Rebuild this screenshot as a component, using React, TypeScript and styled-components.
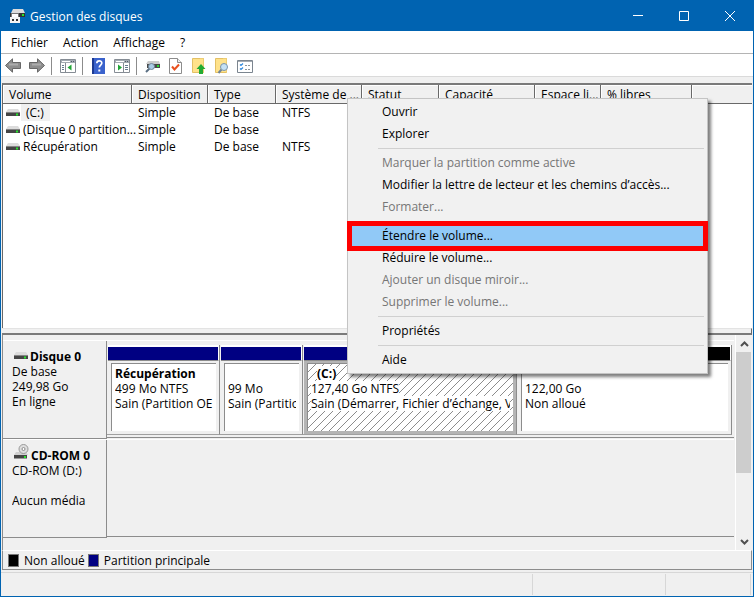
import React from "react";
import styled, { createGlobalStyle, css } from "styled-components";

const GlobalStyle = createGlobalStyle`
  *, *::before, *::after { box-sizing: border-box; }
  body { margin: 0; background: #f0f0f0; }
  body, button { font-family: "Open Sans", "Noto Sans", sans-serif; font-size: 12px; line-height: 15px; color: #000; }
  button { border: 0; padding: 0; margin: 0; background: none; }
  svg { display: block; flex: none; }
`;

const Window = styled.div`
  display: flex;
  flex-direction: column;
  min-height: 100vh;
  border: 1px solid #0063b1;
  background: #f0f0f0;
  position: relative;
`;

const TitleBar = styled.header`
  display: flex;
  align-items: center;
  height: 30px;
  padding-left: 8px;
  gap: 4px;
  background: #0063b1;
  color: #fff;
`;

const Title = styled.h1`
  flex: 1;
  margin: 0;
  font-size: 12px;
  font-weight: 400;
`;

const WindowControls = styled.div`
  display: flex;
`;

const WindowButton = styled.button`
  display: grid;
  place-items: center;
  width: 46px;
  height: 30px;
`;

const MenuBar = styled.nav`
  display: flex;
  gap: 15px;
  height: 23px;
  padding: 0 10px;
  background: #fff;
  border-bottom: 1px solid #b4b4b4;
`;

const ToolBar = styled.div`
  display: flex;
  align-items: center;
  height: 23px;
  padding: 2px 0 0 1px;
  background: #fff;
  border-bottom: 1px solid #dadada;
`;

const ToolButton = styled.button`
  display: grid;
  place-items: center;
  width: 23px;
  height: 20px;
`;

const ToolDivider = styled.span`
  width: 1px;
  height: 18px;
  margin: 0 4px 0 3px;
  background: #8c8c8c;
`;

const Panes = styled.main`
  flex: 1;
  display: flex;
  flex-direction: column;
  margin: 6px 1px 0;
`;

const ListPane = styled.section`
  flex: 1;
  min-height: 120px;
  border-top: 2px solid #7a7a7a;
  border-left: 1px solid #696969;
  background: #fff;
  overflow: hidden;
`;

const VolumeTable = styled.table`
  width: 100%;
  table-layout: fixed;
  border-collapse: separate;
  border-spacing: 0;
`;

const Col = styled.col<{ $w?: number }>`
  width: ${(p) => (p.$w ? `${p.$w}px` : "auto")};
`;

const HeadCell = styled.th<{ $last?: boolean }>`
  height: 19px;
  padding: 0 0 0 6px;
  white-space: nowrap;
  text-align: left;
  font-weight: 400;
  line-height: 15px;
  background: #f0f0f0;
  border-bottom: 1px solid #696969;
  border-right: ${(p) => (p.$last ? "0" : "1px solid #696969")};
  box-shadow: inset 1px 1px #fff;
`;

const Cell = styled.td`
  height: 17px;
  padding: 0 6px;
  white-space: nowrap;
`;

const VolumeCell = styled(Cell)`
  padding: 0 0 0 3px;
`;

const VolumeName = styled.div`
  display: flex;
  align-items: center;
  gap: 1px;
`;

const VolumeLabel = styled.span<{ $selected?: boolean }>`
  line-height: 17px;
  padding: ${(p) => (p.$selected ? "0 6px 0 5px" : "0 2px")};
  background: ${(p) => (p.$selected ? "#f0f0f0" : "transparent")};
`;

const Splitter = styled.div`
  height: 7px;
  border-top: 1px solid #e3e3e3;
  border-right: 1px solid #696969;
  border-bottom: 2px solid #7a7a7a;
  background: #f0f0f0;
`;

const GraphPane = styled.section`
  display: flex;
  border-left: 1px solid #8c8c8c;
`;

const DiskList = styled.div`
  flex: 1;
  min-width: 0;
  padding: 5px 1px 12px 0;
  border-right: 1px solid #fff;
`;

const DiskRow = styled.article`
  display: grid;
  grid-template-columns: 104px 1fr;
  height: 99px;
  border-top: 1px solid #fff;
`;

const DiskLabel = styled.div`
  padding: 8px 0 0 9px;
  border-right: 1px solid #8c8c8c;
  border-bottom: 1px solid #8c8c8c;
`;

const DiskName = styled.h2`
  display: flex;
  align-items: flex-end;
  gap: 2px;
  height: 15px;
  margin: 0;
  padding-left: 2px;
  font-size: 12px;
  line-height: 15px;
  font-weight: 700;
  white-space: nowrap;
  svg { margin-bottom: 4px; }
`;

const Line = styled.div`
  height: 15px;
  white-space: nowrap;
  overflow: hidden;
`;

const DiskTrack = styled.div`
  display: grid;
  grid-template-columns: 113fr 83fr 214fr 215fr;
  padding: 4px 2px 0 0;
  margin-bottom: 1px;
  border-bottom: 1px solid #8c8c8c;
`;

const Partition = styled.div`
  display: flex;
  flex-direction: column;
  min-width: 0;
  height: 90px;
  padding-left: 1px;
  border-right: 1px solid #8c8c8c;
  border-bottom: 1px solid #a0a0a0;
`;

const PartitionBar = styled.div<{ $free?: boolean }>`
  height: 16px;
  border-top: 2px solid #fff;
  border-bottom: 1px solid #8c8c8c;
  border-right: 1px solid #fff;
  background: ${(p) => (p.$free ? "#000" : "#000082")};
`;

const hatch = css`
  background: linear-gradient(135deg, #fff 46%, #8c8c8c 46% 54%, #fff 54%) 0 0 / 8px 8px;
`;

const PartitionFrame = styled.div<{ $selected?: boolean }>`
  flex: 1;
  display: flex;
  padding: 2px 3px 3px;
  background: ${(p) => (p.$selected ? "#b4b4b4" : "#f0f0f0")};
`;

const PartitionBody = styled.div<{ $selected?: boolean }>`
  flex: 1;
  min-width: 0;
  padding: 2px 3px 0;
  border-left: 1px solid #8c8c8c;
  border-top: 1px solid #8c8c8c;
  background: #fff;
  ${(p) => p.$selected && hatch}
`;

const PartitionTitle = styled(Line)`
  font-weight: 700;
`;

const Paper = styled.span<{ $inset?: boolean }>`
  display: inline-block;
  background: #fff;
  margin-left: ${(p) => (p.$inset ? "6px" : "0")};
`;

const ScrollBar = styled.div`
  display: flex;
  flex-direction: column;
  width: 16px;
`;

const ScrollButton = styled.button`
  display: grid;
  place-items: center;
  height: 17px;
  width: 100%;
`;

const ScrollTrack = styled.div`
  flex: 1;
`;

const ScrollThumb = styled.div`
  width: 15px;
  height: 67%;
  background: #cdcdcd;
`;

const Legend = styled.footer`
  display: flex;
  align-items: center;
  gap: 3px;
  height: 20px;
  padding-left: 5px;
  border: 1px solid #8c8c8c;
  border-top-color: #fff;
`;

const LegendItem = styled.span`
  display: flex;
  align-items: center;
  gap: 5px;
`;

const Swatch = styled.span<{ $free?: boolean }>`
  width: 11px;
  height: 13px;
  border: 1px solid #777;
  background: ${(p) => (p.$free ? "#000" : "#000082")};
`;

const StatusBar = styled.div`
  display: grid;
  grid-template-columns: 1fr 133px 85px;
  height: 24px;
  margin-top: 2px;
  padding-right: 2px;
  border-top: 1px solid #d7d7d7;
`;

const StatusCell = styled.span`
  margin: 1px 0;
  border-right: 1px solid #d7d7d7;
`;

const ContextMenu = styled.div`
  position: absolute;
  left: 346px;
  top: 97px;
  width: 361px;
  padding: 2px;
  border: 1px solid #c4c4c4;
  background: #f1f1f1;
  box-shadow: 3px 3px 3px rgba(0, 0, 0, 0.5);
`;

const MenuItem = styled.button<{ $active?: boolean }>`
  position: relative;
  display: block;
  width: 100%;
  height: 22px;
  padding: 0 0 1px 32px;
  text-align: left;
  background: ${(p) => (p.$active ? "#91c9f7" : "transparent")};
  &:disabled { color: #767676; }
  ${(p) =>
    p.$active &&
    css`
      z-index: 1;
      &::after {
        content: "";
        position: absolute;
        inset: -4px -3px;
        border: 5px solid #fe0000;
      }
    `}
`;

const MenuSeparator = styled.hr`
  height: 1px;
  margin: 3px 1px 3px 28px;
  border: 0;
  background: #d0d0d0;
`;

const DriveIcon = () => (
  <svg width="14" height="8" viewBox="0 0 14 8" aria-hidden="true">
    <path d="M2 0h10l2 3H0z" fill="#dcdcdc" />
    <path d="M0 3h14v4H0z" fill="#454545" />
    <path d="M0 3h14v1H0z" fill="#858585" />
    <path d="M10 4.500h2v2h-2z" fill="#27e32c" />
  </svg>
);

const CdIcon = () => (
  <svg width="15" height="15" viewBox="0 0 15 15" aria-hidden="true">
    <path d="M2 8h10l2 3H0z" fill="#d0d0d0" />
    <circle cx="9.500" cy="5" r="4.500" fill="#dedede" stroke="#999" />
    <circle cx="9.500" cy="5" r="1.500" fill="#fff" stroke="#8c8c8c" />
    <path d="M0 11h13v3.500H0z" fill="#454545" />
    <path d="M10 12h2v2h-2z" fill="#27e32c" />
  </svg>
);

const AppIcon = () => (
  <svg width="17" height="16" viewBox="0 0 17 16" aria-hidden="true">
    <path d="M4 1h10l2 4H2z" fill="#dcdcdc" />
    <path d="M1 5h15v4H1z" fill="#333" />
    <path d="M13 6h2v2h-2z" fill="#27e32c" />
    <path d="M2.500 5.500h7v4h-7z" fill="#fff" stroke="#777" />
    <path d="M1 9h10v6H1z" fill="#f4f4f4" />
    <path d="M3 11h2v2H3zM7 11h2v2H7z" fill="#333" />
  </svg>
);

const Arrow = ({ d }: { d: string }) => (
  <svg width="17" height="16" viewBox="0 0 17 16" aria-hidden="true">
    <path d={d} fill="#8e8e8e" stroke="#686868" strokeLinejoin="round" />
    <path d="M4 6.500h9" stroke="#adadad" strokeWidth="2" />
  </svg>
);

const PaneIcon = ({ right }: { right?: boolean }) => (
  <svg width="16" height="14" viewBox="0 0 16 14" aria-hidden="true">
    <path d="M.5.5h15v13H.5z" fill="#fff" stroke="#858c94" />
    <path d="M1 1h14v3H1z" fill="#a4abb3" />
    <path d="M2 2.500h8" stroke="#fff" />
    <path d="M11 2.500h1M13 2.500h1" stroke="#4e5967" />
    <path d={right ? "M9.500 4v9" : "M5.500 4v9"} stroke="#858c94" />
    <path d={right ? "M11 6.500h3M11 8.500h3M11 10.500h3" : "M2 6.500h2M2 8.500h2M2 10.500h2"} stroke="#677b90" />
    <path d={right ? "M4 5.500v6l4-3z" : "M11.500 5.500v6l-4-3z"} fill="#20a536" />
  </svg>
);

const HelpIcon = () => (
  <svg width="13" height="16" viewBox="0 0 13 16" aria-hidden="true">
    <path d="M0 0h13v16H0z" fill="#3a62cc" />
    <path d="M0 0h2v16H0z" fill="#1d3a91" />
    <path d="M4.800 5.300c0-3.200 5-3.200 5-.3 0 2.100-2.500 2-2.500 4.600" fill="none" stroke="#fff" strokeWidth="1.700" />
    <path d="M6.300 11.500h2v2h-2z" fill="#fff" />
  </svg>
);

const InspectDriveIcon = () => (
  <svg width="16" height="14" viewBox="0 0 16 14" aria-hidden="true">
    <path d="M3 2h11l1 3H1z" fill="#ccc" />
    <path d="M2 5h13v4H2z" fill="#484848" />
    <path d="M12 6h2v2h-2z" fill="#27d82c" />
    <path d="M4.500 9.500L1 13" stroke="#5a6f83" strokeWidth="2" />
    <circle cx="6.500" cy="7.500" r="3" fill="#a9cbe5" stroke="#6f8598" />
  </svg>
);

const CheckPageIcon = () => (
  <svg width="13" height="16" viewBox="0 0 13 16" aria-hidden="true">
    <path d="M.5.5h8l4 4v11H.5z" fill="#fff" stroke="#8c8c8c" />
    <path d="M8.500.5v4h4" fill="#eee" stroke="#8c8c8c" />
    <path d="M3 8.500l2.500 3L10 6.500" fill="none" stroke="#e9501e" strokeWidth="2" />
  </svg>
);

const FolderIcon = ({ search }: { search?: boolean }) => (
  <svg width="15" height="16" viewBox="0 0 15 16" aria-hidden="true">
    <path d="M1.500.5h11v14h-11z" fill="#ffe28a" stroke="#e3c065" />
    <path d="M9 .5h3.500v14" fill="none" stroke="#eccd74" />
    {search ? (
      <>
        <path d="M7.500 11.500L4.500 15" stroke="#718395" strokeWidth="2" />
        <circle cx="10" cy="9" r="3.500" fill="#c5e1f5" stroke="#7a94aa" />
      </>
    ) : (
      <path d="M10 6l4.500 5H12v5H8v-5H5.500z" fill="#23ab32" />
    )}
  </svg>
);

const ChecklistIcon = () => (
  <svg width="16" height="13" viewBox="0 0 16 13" aria-hidden="true">
    <path d="M.5.500h15v12H.5z" fill="#fff" stroke="#7b858f" />
    <path d="M1 1h14v1H1z" fill="#a4abb3" />
    <path d="M3 4.500l1 1 2-2M3 8.500l1 1 2-2" fill="none" stroke="#318be0" strokeWidth="1.200" />
    <path d="M8 5.500h2M11 5.500h2M8 9.500h2M11 9.500h2" stroke="#8b949c" />
  </svg>
);

const Chevron = ({ up }: { up?: boolean }) => (
  <svg width="9" height="6" viewBox="0 0 9 6" aria-hidden="true">
    <path d={up ? "M1 5l3.500-3.500L8 5" : "M1 1l3.500 3.500L8 1"} fill="none" stroke="#505050" strokeWidth="2" />
  </svg>
);

const columns: { name: string; width?: number }[] = [
  { name: "Volume", width: 129 },
  { name: "Disposition", width: 76 },
  { name: "Type", width: 68 },
  { name: "Système de ...", width: 86 },
  { name: "Statut", width: 77 },
  { name: "Capacité", width: 96 },
  { name: "Espace li...", width: 66 },
  { name: "% libres", width: 91 },
  { name: "" },
];

const volumes = [
  { name: "(C:)", fs: "NTFS", selected: true },
  { name: "(Disque 0 partition...", fs: "" },
  { name: "Récupération", fs: "NTFS" },
];

const partitions = [
  { title: "Récupération", size: "499 Mo NTFS", state: "Sain (Partition OEM)" },
  { title: "", size: "99 Mo", state: "Sain (Partition" },
  { title: "(C:)", size: "127,40 Go NTFS", state: "Sain (Démarrer, Fichier d’échange, Vidage", selected: true },
  { title: "", size: "122,00 Go", state: "Non alloué", free: true },
];

const menu: ({ label: string; disabled?: boolean; active?: boolean } | null)[] = [
  { label: "Ouvrir" },
  { label: "Explorer" },
  null,
  { label: "Marquer la partition comme active", disabled: true },
  { label: "Modifier la lettre de lecteur et les chemins d’accès..." },
  { label: "Formater...", disabled: true },
  null,
  { label: "Étendre le volume...", active: true },
  { label: "Réduire le volume..." },
  { label: "Ajouter un disque miroir...", disabled: true },
  { label: "Supprimer le volume...", disabled: true },
  null,
  { label: "Propriétés" },
  null,
  { label: "Aide" },
];

export default function App() {
  return (
    <>
      <GlobalStyle />
      <Window>
        <TitleBar>
          <AppIcon />
          <Title>Gestion des disques</Title>
          <WindowControls>
            <WindowButton aria-label="Réduire">
              <svg width="10" height="10" viewBox="0 0 10 10"><path d="M0 4.500h10" stroke="#fff" /></svg>
            </WindowButton>
            <WindowButton aria-label="Agrandir">
              <svg width="10" height="10" viewBox="0 0 10 10"><path d="M.5.5h9v9h-9z" fill="none" stroke="#fff" /></svg>
            </WindowButton>
            <WindowButton aria-label="Fermer">
              <svg width="10" height="10" viewBox="0 0 10 10"><path d="M0 0l10 10M10 0L0 10" stroke="#fff" /></svg>
            </WindowButton>
          </WindowControls>
        </TitleBar>

        <MenuBar>
          {["Fichier", "Action", "Affichage", "?"].map((m) => (
            <button key={m}>{m}</button>
          ))}
        </MenuBar>

        <ToolBar role="toolbar">
          <ToolButton aria-label="Précédent"><Arrow d="M.5 7.500L7.500.8v3.700h8v6h-8v3.700z" /></ToolButton>
          <ToolButton aria-label="Suivant"><Arrow d="M16.500 7.500L9.500.8v3.700h-8v6h8v3.700z" /></ToolButton>
          <ToolDivider />
          <ToolButton aria-label="Afficher l’arborescence"><PaneIcon /></ToolButton>
          <ToolDivider />
          <ToolButton aria-label="Aide"><HelpIcon /></ToolButton>
          <ToolButton aria-label="Afficher le volet Actions"><PaneIcon right /></ToolButton>
          <ToolDivider />
          <ToolButton aria-label="Analyser les disques"><InspectDriveIcon /></ToolButton>
          <ToolButton aria-label="Valider"><CheckPageIcon /></ToolButton>
          <ToolButton aria-label="Dossier parent"><FolderIcon /></ToolButton>
          <ToolButton aria-label="Rechercher"><FolderIcon search /></ToolButton>
          <ToolButton aria-label="Paramètres"><ChecklistIcon /></ToolButton>
        </ToolBar>

        <Panes>
          <ListPane>
            <VolumeTable>
              <colgroup>
                {columns.map((c) => <Col key={c.name} $w={c.width} />)}
              </colgroup>
              <thead>
                <tr>
                  {columns.map((c) => <HeadCell key={c.name} $last={!c.name}>{c.name}</HeadCell>)}
                </tr>
              </thead>
              <tbody>
                {volumes.map((v) => (
                  <tr key={v.name}>
                    <VolumeCell>
                      <VolumeName>
                        <DriveIcon />
                        <VolumeLabel $selected={v.selected}>{v.name}</VolumeLabel>
                      </VolumeName>
                    </VolumeCell>
                    <Cell>Simple</Cell>
                    <Cell>De base</Cell>
                    <Cell>{v.fs}</Cell>
                  </tr>
                ))}
              </tbody>
            </VolumeTable>
          </ListPane>
          <Splitter />
          <GraphPane>
            <DiskList>
              <DiskRow>
                <DiskLabel>
                  <DiskName><DriveIcon />Disque 0</DiskName>
                  <Line>De base</Line>
                  <Line>249,98 Go</Line>
                  <Line>En ligne</Line>
                </DiskLabel>
                <DiskTrack>
                  {partitions.map((p) => (
                    <Partition key={p.size}>
                      <PartitionBar $free={p.free} />
                      <PartitionFrame $selected={p.selected}>
                        <PartitionBody $selected={p.selected}>
                          <PartitionTitle><Paper $inset={p.selected}>{p.title}</Paper></PartitionTitle>
                          <Line><Paper>{p.size}</Paper></Line>
                          <Line><Paper>{p.state}</Paper></Line>
                        </PartitionBody>
                      </PartitionFrame>
                    </Partition>
                  ))}
                </DiskTrack>
              </DiskRow>
              <DiskRow>
                <DiskLabel>
                  <DiskName><CdIcon />CD-ROM 0</DiskName>
                  <Line>CD-ROM (D:)</Line>
                  <Line />
                  <Line>Aucun média</Line>
                </DiskLabel>
                <DiskTrack />
              </DiskRow>
            </DiskList>
            <ScrollBar>
              <ScrollButton aria-label="Défiler vers le haut"><Chevron up /></ScrollButton>
              <ScrollTrack><ScrollThumb /></ScrollTrack>
              <ScrollButton aria-label="Défiler vers le bas"><Chevron /></ScrollButton>
            </ScrollBar>
          </GraphPane>
          <Legend>
            <LegendItem><Swatch $free />Non alloué</LegendItem>
            <LegendItem><Swatch />Partition principale</LegendItem>
          </Legend>
        </Panes>
        <StatusBar>
          <StatusCell />
          <StatusCell />
          <StatusCell />
        </StatusBar>

        <ContextMenu role="menu">
          {menu.map((m, i) =>
            m ? (
              <MenuItem key={m.label} role="menuitem" disabled={m.disabled} $active={m.active}>{m.label}</MenuItem>
            ) : (
              <MenuSeparator key={i} />
            )
          )}
        </ContextMenu>
      </Window>
    </>
  );
}
